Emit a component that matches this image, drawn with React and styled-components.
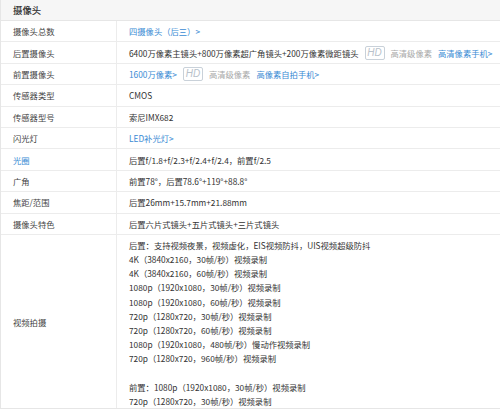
import React from "react";
import styled, { createGlobalStyle } from "styled-components";

const Global = createGlobalStyle`
  html, body { margin: 0; padding: 0; background: #fff; }
  body { font-family: "Noto Sans CJK SC", "Noto Sans", sans-serif; }
  * { box-sizing: border-box; }
`;

const Table = styled.div`
  width: 500px;
  border-left: 1px solid #e6e6e6;
  border-bottom: 1px solid #e6e6e6;
  font-size: 8.3px;
  color: #333;
`;

const Header = styled.div`
  height: 21px;
  background: #f6f6f6;
  border-bottom: 1px solid #e6e6e6;
  display: flex;
  align-items: center;
  padding-left: 12px;
  font-size: 9.4px;
  font-weight: 500;
  color: #333;
`;

const Row = styled.div`
  display: grid;
  grid-template-columns: 116px 1fr;
  height: ${(p) => p.$h || "21.4px"};
  border-bottom: ${(p) => (p.$last ? "none" : "1px solid #ececec")};
`;

const Label = styled.div`
  display: flex;
  align-items: center;
  padding-left: 12px;
  border-right: 1px solid #ececec;
  color: ${(p) => (p.$link ? "#3a8bd4" : "#444")};
`;

const Value = styled.div`
  display: flex;
  align-items: center;
  padding-left: 12px;
  white-space: nowrap;
  color: #333;
`;

const Lines = styled.div`
  padding: 3px 0 0 12px;
  line-height: 14.2px;
  white-space: nowrap;
  color: #333;
`;

const Line = styled.div`
  height: 14.2px;
`;

const Link = styled.span`
  color: #3a8bd4;
  margin-right: ${(p) => p.$mr || "0"};
`;

const Gray = styled.span`
  color: #a8a8a8;
  margin-right: 6px;
`;

const HD = styled.span`
  display: inline-flex;
  align-items: center;
  justify-content: center;
  width: 20px;
  height: 14px;
  border: 1px solid #c9d1d9;
  border-radius: 2px;
  color: #b9c2cb;
  font-family: "Liberation Sans", Arial, sans-serif;
  font-style: italic;
  font-size: 10px;
  margin: 0 6px 0 6px;
`;

const rows = [
  ["摄像头总数", <Link>四摄像头（后三）&gt;</Link>],
  [
    "后置摄像头",
    <>
      6400万像素主镜头+800万像素超广角镜头+200万像素微距镜头
      <HD>HD</HD>
      <Gray>高清级像素</Gray>
      <Link>高清像素手机&gt;</Link>
    </>,
  ],
  [
    "前置摄像头",
    <>
      <Link>1600万像素&gt;</Link>
      <HD>HD</HD>
      <Gray>高清级像素</Gray>
      <Link>高像素自拍手机&gt;</Link>
    </>,
  ],
  ["传感器类型", "CMOS"],
  ["传感器型号", "索尼IMX682"],
  ["闪光灯", <Link>LED补光灯&gt;</Link>],
  ["光圈", "后置f/1.8+f/2.3+f/2.4+f/2.4，前置f/2.5", true],
  ["广角", "前置78°，后置78.6°+119°+88.8°"],
  ["焦距/范围", "后置26mm+15.7mm+21.88mm"],
  ["摄像头特色", "后置六片式镜头+五片式镜头+三片式镜头"],
];

const video = [
  "后置：支持视频夜景，视频虚化，EIS视频防抖，UIS视频超级防抖",
  "4K（3840x2160，30帧/秒）视频录制",
  "4K（3840x2160，60帧/秒）视频录制",
  "1080p（1920x1080，30帧/秒）视频录制",
  "1080p（1920x1080，60帧/秒）视频录制",
  "720p（1280x720，30帧/秒）视频录制",
  "720p（1280x720，60帧/秒）视频录制",
  "1080p（1920x1080，480帧/秒）慢动作视频录制",
  "720p（1280x720，960帧/秒）视频录制",
  "",
  "前置：1080p（1920x1080，30帧/秒）视频录制",
  "720p（1280x720，30帧/秒）视频录制",
];

export default function App() {
  return (
    <>
      <Global />
      <Table>
        <Header>摄像头</Header>
        {rows.map(([label, value, link]) => (
          <Row key={label}>
            <Label $link={link}>{label}</Label>
            <Value>{value}</Value>
          </Row>
        ))}
        <Row $h="173px" $last>
          <Label>视频拍摄</Label>
          <Lines>
            {video.map((l, i) => (
              <Line key={i}>{l}</Line>
            ))}
          </Lines>
        </Row>
      </Table>
    </>
  );
}
